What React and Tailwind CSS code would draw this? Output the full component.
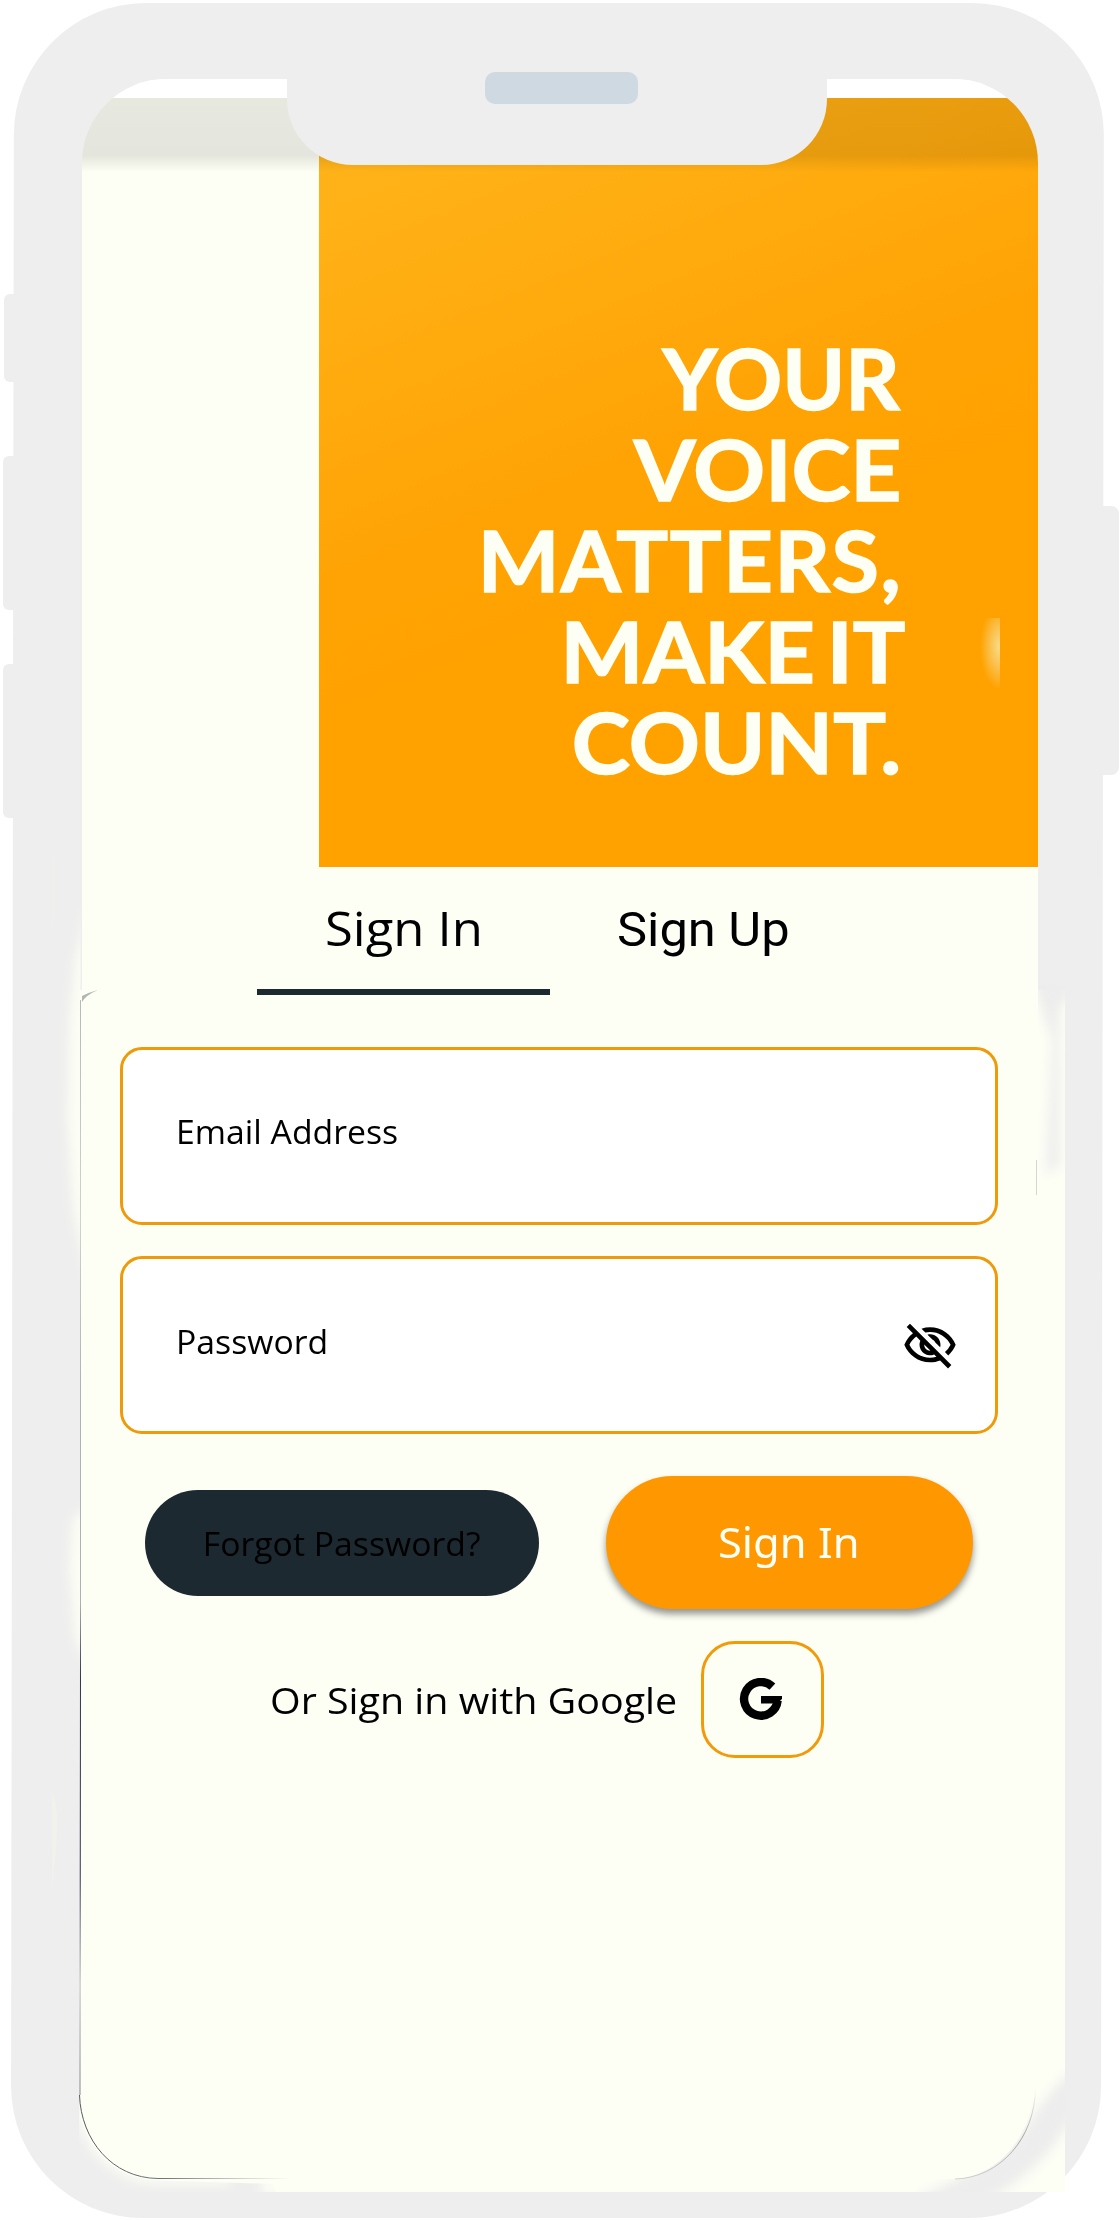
import React from "react";
import { MdOutlineVisibilityOff } from "react-icons/md";

const headline = [
  { text: "YOUR", cls: "scale-x-[1.015]" },
  { text: "VOICE", cls: "scale-x-[1.065] -mr-[2px]" },
  { text: "MATTERS,", cls: "scale-x-[1.035] tracking-[1.5px] -mr-[2px]" },
  { text: "MAKE IT", cls: "scale-x-[1.05] [word-spacing:-9px] -mr-[5px]" },
  { text: "COUNT.", cls: "scale-x-[1.055] -mr-[1px]" },
];

function GoogleMark() {
  return (
    <svg className="-ml-[3px] -mt-[1px]" width="44" height="42" viewBox="0 0 44 42" fill="none" aria-hidden="true">
      <path d="M33.4 8.6A16.8 16.8 0 1 0 38.6 22.5" stroke="#000" strokeWidth="8.4" />
      <path d="M22 18H43V21L38 25.6H22Z" fill="#000" />
    </svg>
  );
}

/* Worn highlights and hairlines along the inner bezel of the handset. */
function BezelMarks() {
  return (
    <svg className="pointer-events-none absolute left-0 top-0" width="1120" height="2220" viewBox="0 0 1120 2220" fill="none" aria-hidden="true">
      <defs>
        <filter id="soft" x="-100%" y="-20%" width="300%" height="140%">
          <feGaussianBlur stdDeviation="6" />
        </filter>
        <clipPath id="leftRail"><path d="M14 900H80.5V2100H14Z" /></clipPath>
        <clipPath id="rightRail"><path d="M1038 985H1065V1260H1038Z" /></clipPath>
        <clipPath id="cornerLeft"><path d="M79 2090C79 2140 112 2178 158 2178H330V2192H79Z" /></clipPath>
        <clipPath id="cornerRight"><path d="M1036 2070C1036 2134 1000 2179 950 2179H900V2192H1065V2040H1036Z" /></clipPath>
        <linearGradient id="hair" x1="0" y1="1000" x2="0" y2="2095" gradientUnits="userSpaceOnUse">
          <stop offset="0" stopColor="#a5a8aa" stopOpacity="0.8" />
          <stop offset="0.2" stopColor="#c5c7c3" stopOpacity="0.8" />
          <stop offset="0.35" stopColor="#9d9faa" stopOpacity="0.8" />
          <stop offset="0.55" stopColor="#b0b1b5" />
          <stop offset="0.62" stopColor="#30344e" />
          <stop offset="0.8" stopColor="#30344e" />
          <stop offset="0.9" stopColor="#bdbdc0" />
          <stop offset="1" stopColor="#80848c" />
        </linearGradient>
        <linearGradient id="hairBottom" x1="79" y1="0" x2="290" y2="0" gradientUnits="userSpaceOnUse">
          <stop offset="0" stopColor="#55595f" />
          <stop offset="0.4" stopColor="#70747a" />
          <stop offset="1" stopColor="#90949a" stopOpacity="0" />
        </linearGradient>
        <linearGradient id="hairRight" x1="0" y1="2088" x2="0" y2="2179" gradientUnits="userSpaceOnUse">
          <stop offset="0" stopColor="#a6a8a4" stopOpacity="0" />
          <stop offset="0.55" stopColor="#959792" />
          <stop offset="1" stopColor="#a6a8a4" stopOpacity="0.5" />
        </linearGradient>
      </defs>
      <g clipPath="url(#leftRail)">
        <path d="M90 900L76 960L70 1020L68 1120L74 1210L90 1290Z" fill="#fdfff5" filter="url(#soft)" />
        <path d="M90 1505L73 1520L70 1570L76 1640L90 1670Z" fill="#fdfff5" filter="url(#soft)" />
      </g>
      <path d="M52 850Q58 880 52 930Z" fill="#f0f0ea" />
      <path d="M52 1792Q62 1810 52 1885Z" fill="#f2f2ec" />
      <path d="M80.5 1000V1660L80 2095" stroke="url(#hair)" strokeWidth="1" />
      <path d="M82 1002Q86 995 98 990Q90 992 82 996Z" fill="#b4b6b4" />
      <g clipPath="url(#rightRail)">
        <path d="M1030 960H1074V988L1060 1010L1060 1165L1046 1175L1052 1040L1038 1000Z" fill="#ededed" filter="url(#soft)" />
      </g>
      <path d="M1036.500 1160V1195" stroke="#c4c6c4" strokeWidth="0.7" />
      <g clipPath="url(#cornerLeft)">
        <path d="M50 2080L76 2100Q90 2172 150 2180L275 2184V2220H50Z" fill="#eee" />
        <path d="M79 2095C81 2140 112 2178 158 2179H230" stroke="#fdfff5" strokeWidth="10" filter="url(#soft)" />
        <path d="M262 2176H330V2196H262Z" fill="#fdfff5" filter="url(#soft)" />
      </g>
      <g clipPath="url(#cornerRight)">
        <path d="M1080 2085Q1056 2110 1040 2136Q1005 2180 925 2212" stroke="#ededed" strokeWidth="34" filter="url(#soft)" />
      </g>
      <path d="M79.500 2095C81 2140 112 2178 158 2178.500H290" stroke="url(#hairBottom)" strokeWidth="1" />
      <path d="M1035.500 2088C1035 2138 1000 2178 955 2179" stroke="url(#hairRight)" strokeWidth="0.9" />
    </svg>
  );
}

function Hero() {
  return (
    <div className="relative ml-[237px] h-[769px] bg-[linear-gradient(158deg,#ffb51c_0%,#ffae12_20%,#ffa305_46%,#ffa200_60%)]">
      <h1 className="flex flex-col items-end pt-[235px] pr-[138px] text-[83.5px] leading-[91px] font-bold text-[#fefff4] font-['Lato',sans-serif] [-webkit-text-stroke:1.5px_#fefff4]">
        {headline.map((l) => (
          <span key={l.text} className={`origin-right ${l.cls}`}>{l.text}</span>
        ))}
      </h1>
      <div className="absolute left-[661px] top-[520px] h-[72px] w-[20px] bg-[radial-gradient(ellipse_at_100%_40%,#f9dd8c_0%,#fbc04b_35%,#ffa20000_70%)]" />
    </div>
  );
}

export default function App() {
  return (
    <div className="relative h-[2220px] w-[1120px] overflow-hidden bg-white font-['Open_Sans',sans-serif] text-black">
      <div className="absolute left-[4px] top-[294px] h-[88px] w-[20px] rounded-[6px] bg-[#eee]" />
      <div className="absolute left-[3px] top-[456px] h-[154px] w-[20px] rounded-[6px] bg-[#eee]" />
      <div className="absolute left-[3px] top-[664px] h-[154px] w-[20px] rounded-[6px] bg-[#eee]" />
      <div className="absolute left-[1095px] top-[506px] h-[269px] w-[24px] rounded-[8px] bg-[#eee]" />

      <main className="relative ml-[14px] mt-[3px] h-[2215px] w-[1090px] pt-[76px] pl-[67px]">
        <div className="absolute inset-0 origin-top rounded-[132px] bg-[#eee] skew-x-[-0.08deg]" />
        <section className="relative ml-[1px] h-[911px] w-[956px] overflow-hidden rounded-t-[84px] bg-[#fdfff5]">
          <div className="h-[19px] bg-white" />
          <Hero />
          <div className="absolute inset-x-0 top-[19px] h-[74px] bg-linear-to-b from-[#e9e9e9] from-0% via-[#e6e6e6] via-78% to-white mix-blend-multiply" />
          <div className="flex pt-[29px] text-[48px] leading-[64px]">
            <span className="ml-[243px] w-[292px] origin-left scale-x-[1.058]">Sign In</span>
            <span className="mt-[2px] origin-left scale-x-[1.055] font-['Roboto',sans-serif]">Sign Up</span>
          </div>
        </section>

        <section className="relative -ml-[1px] h-[1202px] w-[985px] bg-[#fdfff5]">
          <div className="ml-[177px] h-[6px] w-[293px] -translate-y-[1px] bg-[#1d2930]" />

          <div className="ml-[40px] mt-[51px] flex h-[178px] w-[878px] items-center rounded-[22px] border-[3px] border-[#ee9a0b] bg-white pl-[53px] text-[32px]">
            <span className="-mt-[8px] origin-left scale-x-[1.055]">Email Address</span>
          </div>
          <div className="ml-[40px] mt-[31px] flex h-[178px] w-[878px] items-center justify-between rounded-[22px] border-[3px] border-[#ee9a0b] bg-white pl-[53px] pr-[37px] text-[32px]">
            <span className="-mt-[6px] origin-left scale-x-[1.055]">Password</span>
            <MdOutlineVisibilityOff className="mt-[1px] h-[56px] w-[56px]" />
          </div>

          <div className="mt-[42px] ml-[65px] flex items-center">
            <button className="h-[106px] w-[394px] rounded-[54px] bg-[#1d2930] text-[32px]">
              <span className="mt-[2px] inline-block scale-x-[1.055]">Forgot Password?</span>
            </button>
            <button className="ml-[67px] h-[133px] w-[367px] rounded-[67px] bg-[#ff9800] text-[41px] text-[#fefff4] shadow-[0_5px_7px_#0000006b] font-['Noto_Sans',sans-serif]">
              <span className="-ml-[2px] inline-block scale-x-[1.06]">Sign In</span>
            </button>
          </div>

          <div className="mt-[32px] ml-[190px] flex items-center">
            <span className="w-[431px] origin-left scale-x-[1.065] text-[37px]">Or Sign in with Google</span>
            <button className="flex h-[117px] w-[123px] items-center justify-center rounded-[34px] border-[3px] border-[#f19a0a]">
              <GoogleMark />
            </button>
          </div>
        </section>

        <div className="absolute left-[273px] top-[60px] h-[102px] w-[540px] rounded-b-[66px] bg-[#eee]" />
        <div className="absolute left-[471px] top-[69px] h-[32px] w-[153px] rounded-[10px] bg-[#cfd9e2]" />
      </main>
      <BezelMarks />
    </div>
  );
}
